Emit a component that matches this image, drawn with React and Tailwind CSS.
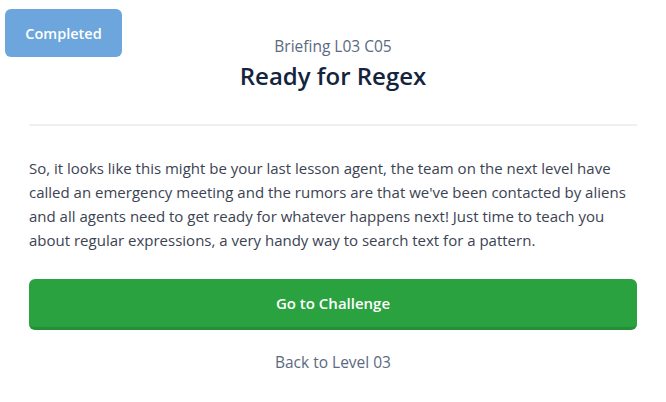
export default function App() {
  return (
    <div
      className="relative w-[666px] h-[402px] bg-white overflow-hidden"
      style={{ fontFamily: '"Open Sans", Lato, sans-serif' }}
    >
      <div className="absolute left-[5px] top-[9px] w-[117px] h-[48px] rounded-[6px] bg-[#6ca6dc] flex items-center justify-center pt-[1px] text-white text-[14.5px] font-semibold">
        Completed
      </div>

      <div className="px-[29px] pt-[36px]">
        <div className="text-center text-[15.5px] leading-[20px] text-[#5b6a80]">Briefing L03 C05</div>
        <h1 className="mt-[5px] text-center text-[24px] leading-[30px] font-semibold text-[#14243d]">
          Ready for Regex
        </h1>
        <div className="mt-[33px] h-[2px] bg-[#eef1f4]" />
        <p className="mt-[30px] text-[15px] leading-[24px] text-[#3b4352]">
          So, it looks like this might be your last lesson agent, the team on the next level have called an emergency
          meeting and the rumors are that we've been contacted by aliens and all agents need to get ready for whatever
          happens next! Just time to teach you about regular expressions, a very handy way to search text for a pattern.
        </p>
        <button className="mt-[27px] w-full h-[51px] rounded-[6px] bg-[#2ba240] border-b-[3px] border-[#238f37] text-white text-[15px] font-semibold">
          Go to Challenge
        </button>
        <div className="mt-[22px] text-center text-[15.5px] leading-[20px] text-[#5b6a80]">Back to Level 03</div>
      </div>
    </div>
  );
}
